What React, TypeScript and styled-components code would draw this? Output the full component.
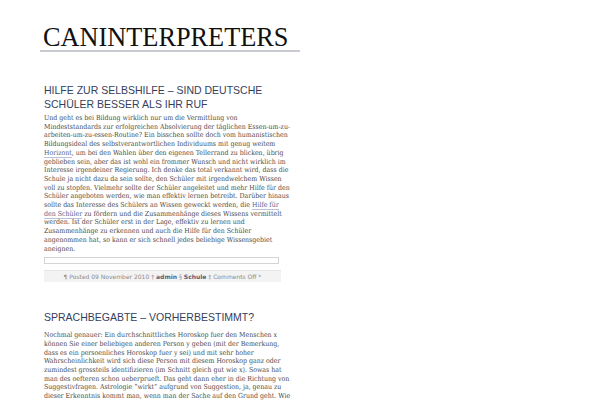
import React from "react";
import styled, { createGlobalStyle } from "styled-components";

const GlobalStyle = createGlobalStyle`
  body {
    margin: 0;
    background: #ffffff;
  }
`;

const Page = styled.div`
  padding: 26px 0 0 40px;
`;

const Header = styled.header`
  width: 260px;
  border-bottom: 2px solid #c9cbd3;
`;

const SiteTitle = styled.h1`
  margin: 0;
  padding-left: 3px;
  font-family: "Liberation Serif", "Times New Roman", serif;
  font-weight: normal;
  font-size: 26.3px;
  line-height: 24px;
  color: #111111;
`;

const Main = styled.main`
  width: 238px;
  padding-left: 4px;
  padding-top: 31px;
`;

const Post = styled.article`
  margin-bottom: 28px;
`;

const PostTitle = styled.h2`
  margin: 0;
  font-family: "Liberation Sans", Arial, sans-serif;
  font-weight: normal;
  font-size: 10.5px;
  line-height: 14px;
  color: #34405c;
  text-transform: uppercase;
`;

const Body = styled.p<{ $gap: number }>`
  margin: ${(p) => p.$gap}px 0 0;
  font-family: "DejaVu Serif Condensed", "DejaVu Serif", serif;
  font-stretch: condensed;
  font-size: 6.95px;
  line-height: 8.7px;
  color: #4a4a4a;
  white-space: nowrap;
`;

const Link = styled.a`
  color: #4d5d8c;
  text-decoration: none;
  border-bottom: 1px solid #b9c2da;
`;

const ShareBox = styled.div`
  margin-top: 4px;
  width: 235px;
  height: 7px;
  border: 1px solid #d4d4d4;
  box-sizing: border-box;
`;

const Meta = styled.div`
  margin-top: 6px;
  width: 237px;
  height: 12px;
  background: #f3f3f4;
  border-top: 1px solid #e6e6e8;
  box-sizing: border-box;
  display: flex;
  align-items: center;
  justify-content: center;
  font-family: "DejaVu Sans", sans-serif;
  font-size: 6px;
  color: #8a8a8a;
  white-space: nowrap;
`;

const MetaLink = styled.span`
  color: #55607a;
  font-weight: 600;
`;

export default function App() {
  return (
    <>
      <GlobalStyle />
      <Page>
        <Header>
          <SiteTitle>CANINTERPRETERS</SiteTitle>
        </Header>
        <Main>
          <Post>
            <PostTitle>Hilfe zur Selbshilfe – sind deutsche Schüler besser als ihr Ruf</PostTitle>
            <Body $gap={3}>
              Und geht es bei Bildung wirklich nur um die Vermittlung von<br />
              Mindeststandards zur erfolgreichen Absolvierung der täglichen Essen-um-zu-<br />
              arbeiten-um-zu-essen-Routine? Ein bisschen sollte doch vom humanistischen<br />
              Bildungsideal des selbstverantwortlichen Individuums mit genug weitem<br />
              <Link href="#">Horizont</Link>, um bei den Wahlen über den eigenen Tellerrand zu blicken, übrig<br />
              geblieben sein, aber das ist wohl ein frommer Wunsch und nicht wirklich im<br />
              Interesse irgendeiner Regierung. Ich denke das total verkannt wird, dass die<br />
              Schule ja nicht dazu da sein sollte, den Schüler mit irgendwelchem Wissen<br />
              voll zu stopfen. Vielmehr sollte der Schüler angeleitet und mehr Hilfe für den<br />
              Schüler angeboten werden, wie man effektiv lernen betreibt. Darüber hinaus<br />
              sollte das Interesse des Schülers an Wissen geweckt werden, die <Link href="#">Hilfe für<br />
              den Schüler</Link> zu fördern und die Zusammenhänge dieses Wissens vermittelt<br />
              werden. Ist der Schüler erst in der Lage, effektiv zu lernen und<br />
              Zusammenhänge zu erkennen und auch die Hilfe für den Schüler<br />
              angenommen hat, so kann er sich schnell jedes beliebige Wissensgebiet<br />
              aneignen.
            </Body>
            <ShareBox />
            <Meta>
              ¶ Posted 09 November 2010 †&nbsp;<MetaLink>admin</MetaLink>&nbsp;§&nbsp;
              <MetaLink>Schule</MetaLink>&nbsp;‡ Comments Off *
            </Meta>
          </Post>
          <Post>
            <PostTitle>Sprachbegabte – vorherbestimmt?</PostTitle>
            <Body $gap={7}>
              Nochmal genauer: Ein durchschnittliches Horoskop fuer den Menschen x<br />
              können Sie einer beliebigen anderen Person y geben (mit der Bemerkung,<br />
              dass es ein persoenliches Horoskop fuer y sei) und mit sehr hoher<br />
              Wahrscheinlichkeit wird sich diese Person mit diesem Horoskop ganz oder<br />
              zumindest grossteils identifizieren (im Schnitt gleich gut wie x). Sowas hat<br />
              man des oefteren schon ueberprueft. Das geht dann eher in die Richtung von<br />
              Suggestivfragen. Astrologie “wirkt” aufgrund von Suggestion, ja, genau zu<br />
              dieser Erkenntnis kommt man, wenn man der Sache auf den Grund geht. Wie<br />
              immer gilt: wer sucht, der findet.
            </Body>
          </Post>
        </Main>
      </Page>
    </>
  );
}
